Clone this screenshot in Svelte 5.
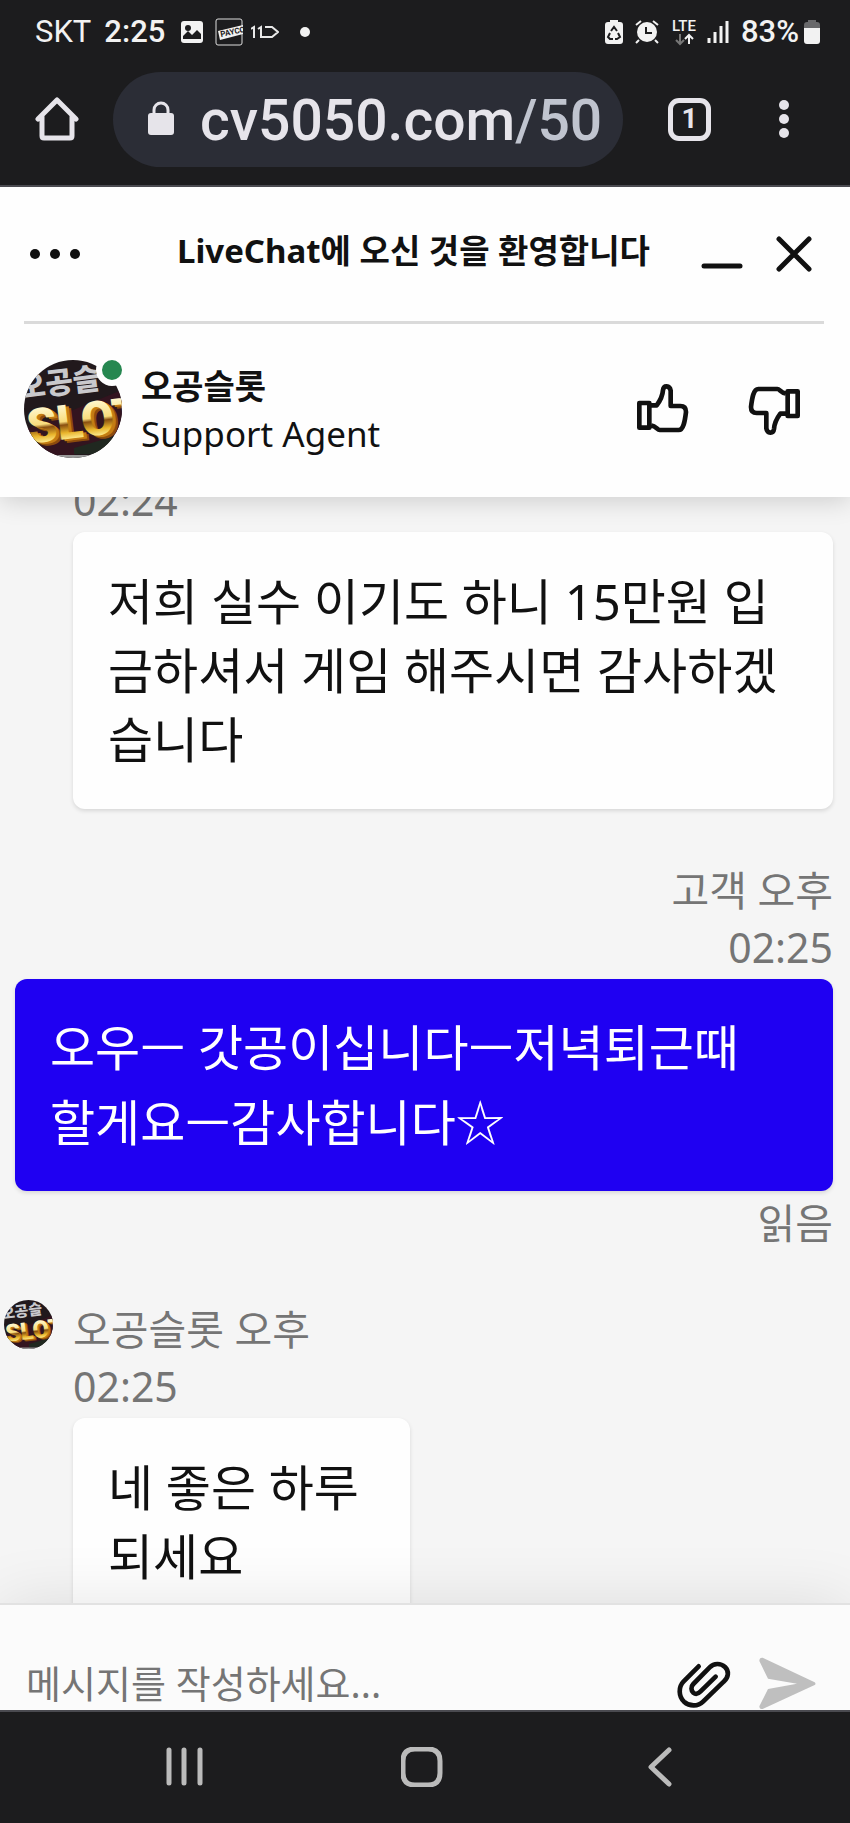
<script>
  const agent = '오공슬롯';

  let draft = $state('');

  const navItems = [
    { label: '최근 앱', path: 'M6 3v33M21 3v33M37 3v33' },
    { label: '홈', path: 'M14 2h13q12 0 12 12v12q0 12 -12 12h-13q-12 0 -12 -12v-12q0 -12 12 -12z' },
    { label: '뒤로', path: 'M30 3L12 20L30 37' }
  ];
</script>

{#snippet avatar(id)}
  <svg class="face" viewBox="0 0 98 98" aria-hidden="true">
    <defs>
      <clipPath id="{id}-clip"><circle cx="49" cy="49" r="49" /></clipPath>
      <linearGradient id="{id}-gold" x1="0" y1="0" x2="0" y2="1">
        <stop offset="0.2" stop-color="#fff6c8" />
        <stop offset="0.48" stop-color="#f8dc7c" />
        <stop offset="0.54" stop-color="#8a5010" />
        <stop offset="0.68" stop-color="#e9b52c" />
        <stop offset="0.82" stop-color="#fff3a0" />
      </linearGradient>
    </defs>
    <g clip-path="url(#{id}-clip)">
      <rect width="98" height="98" fill="#21191c" />
      <path d="M0 70l98-40v40l-50 26H0z" fill="#33141f" />
      <path d="M50 88l48-14v20H50z" fill="#202820" />
      <g transform="rotate(-7 49 49)">
        <text class="kr" x="-3" y="32" font-size="30" fill="#c9c9cc">오공슬</text>
        <text class="slot" x="6" y="82" fill="#8b4d0c">SLOT</text>
        <text class="slot" x="4" y="80" fill="#c27c14">SLOT</text>
        <text class="slot" x="1" y="78" fill="url(#{id}-gold)">SLOT</text>
      </g>
      <rect y="95" width="98" height="3" fill="#999" />
    </g>
  </svg>
{/snippet}

{#snippet thumb()}
  <svg width="55" height="55" viewBox="630 580 165 165" fill="none" stroke="#111" stroke-width="14" stroke-linejoin="round">
    <path d="M643 643h30v74h-30zM680 650h15C710 630 713 620 714 604C716 589 734 589 737 606V652H766C780 652 783 660 783 670C780 695 776 725 760 724H704C697 724 692 712 680 711" />
  </svg>
{/snippet}

<div class="phone" lang="ko">
  <div class="status">
    <span>SKT</span>
    <b class="clock">2:25</b>
    <svg class="photo" width="22" height="22" viewBox="0 0 22 22">
      <rect width="22" height="22" rx="3" fill="#f2f2f2" />
      <circle cx="7" cy="7" r="3" fill="#1c1c1e" />
      <path d="M2 18v-3l5-5 4 4 5-5 4 4v5z" fill="#1c1c1e" />
    </svg>
    <svg class="payco" width="28" height="28" viewBox="0 0 28 28">
      <rect x="1" y="1" width="26" height="26" rx="2" fill="none" stroke="#ddd" />
      <path d="M3 13L28 7v9L5 22z" fill="#f2f2f2" />
      <text x="6" y="19" font-size="8" font-weight="700" fill="#1c1c1e" transform="rotate(-12 6 19)">PAYCO</text>
    </svg>
    <svg class="eleven" width="28" height="14" viewBox="0 0 28 14" fill="none" stroke="#e8e8e8" stroke-width="2">
      <path d="M0 4l3-2v11M7 4l3-2v10h11l6-5-6-5h-7" />
    </svg>
    <svg width="10" height="10" viewBox="0 0 10 10"><circle cx="5" cy="5" r="5" fill="#f2f2f2" /></svg>

    <div class="status-right">
      <svg width="18" height="26" viewBox="0 0 18 26">
        <path d="M5 3V1h8v2h2q3 0 3 3v16q0 3-3 3H3q-3 0-3-3V6q0-3 3-3z" fill="#f2f2f2" />
        <path d="M6 12l3-4 3 4M13 14l2 4-3 2h-2M8 20H5l-2-2 2-4" fill="none" stroke="#1c1c1e" stroke-width="2" />
      </svg>
      <svg class="alarm" width="24" height="24" viewBox="0 0 24 24" fill="none" stroke="#f2f2f2" stroke-width="2">
        <circle cx="12" cy="12" r="10" fill="#f2f2f2" stroke="none" />
        <path d="M1 5l5-4M18 1l5 4M4 20l-3 3M20 20l3 3" />
        <path d="M11 7v6h6" stroke="#1c1c1e" />
      </svg>
      <svg class="lte" width="26" height="28" viewBox="0 0 26 28">
        <text x="0" y="13" font-size="15" font-weight="500" fill="#f2f2f2">LTE</text>
        <path d="M8 16v10M4 22l4 4 4-4" fill="none" stroke="#777" stroke-width="2" />
        <path d="M17 26V17M13 21l4-4 4 4" fill="none" stroke="#f2f2f2" stroke-width="2" />
      </svg>
      <svg class="signal" width="22" height="24" viewBox="0 0 22 24" stroke="#f2f2f2" stroke-width="3">
        <path d="M2 18v5M8 12v11M14 6v17M20 1v22" />
      </svg>
      <b>83%</b>
      <svg class="battery" width="16" height="26" viewBox="0 0 16 26">
        <path d="M4 3V1h8v2h1q3 0 3 3v4H0V6q0-3 3-3z" fill="#69696b" />
        <path d="M0 9h16v13q0 3-3 3H3q-3 0-3-3z" fill="#f2f2f2" />
      </svg>
    </div>
  </div>

  <div class="browser">
    <button class="home" aria-label="홈페이지">
      <svg width="44" height="44" viewBox="0 0 44 44" fill="none" stroke="#e6e4ea" stroke-width="5" stroke-linejoin="round" stroke-linecap="round">
        <path d="M3 22L22 3l19 19M7 19v20q0 2 2 2h26q2 0 2-2V19" />
      </svg>
    </button>
    <button class="address">
      <svg width="26" height="34" viewBox="0 0 26 34">
        <path d="M6 14V9a7 7 0 0 1 14 0v5" fill="none" stroke="#e6e4ea" stroke-width="3" />
        <rect y="12" width="26" height="22" rx="3" fill="#e6e4ea" />
      </svg>
      <span>cv5050.com<i>/50</i></span>
    </button>
    <button class="tabs" aria-label="탭">1</button>
    <button class="more" aria-label="메뉴">
      <svg width="10" height="38" viewBox="0 0 10 38" fill="#e6e4ea">
        <circle cx="5" cy="5" r="5" /><circle cx="5" cy="19" r="5" /><circle cx="5" cy="33" r="5" />
      </svg>
    </button>
  </div>

  <header class="titlebar">
    <button aria-label="옵션">
      <svg width="50" height="10" viewBox="0 0 50 10" fill="#111">
        <circle cx="5" cy="5" r="5" /><circle cx="25" cy="5" r="5" /><circle cx="45" cy="5" r="5" />
      </svg>
    </button>
    <h1>LiveChat에 오신 것을 환영합니다</h1>
    <button aria-label="최소화">
      <svg width="42" height="36" viewBox="0 0 42 36" fill="none" stroke="#111" stroke-width="5" stroke-linecap="round">
        <path d="M3 30h36" />
      </svg>
    </button>
    <button class="close" aria-label="닫기">
      <svg width="36" height="36" viewBox="0 0 36 36" fill="none" stroke="#111" stroke-width="5" stroke-linecap="round">
        <path d="M3 3l30 30M33 3L3 33" />
      </svg>
    </button>
  </header>

  <section class="agent">
    <div class="photo-wrap">
      {@render avatar('big')}
      <span class="online"></span>
    </div>
    <div class="who">
      <h2>{agent}</h2>
      <p>Support Agent</p>
    </div>
    <button aria-label="좋아요">{@render thumb()}</button>
    <button class="down" aria-label="싫어요">{@render thumb()}</button>
  </section>

  <main class="chat">
    <article class="msg first">
      <p class="meta">02:24</p>
      <div class="bubble">저희 실수 이기도 하니 15만원 입금하셔서 게임 해주시면 감사하겠습니다</div>
    </article>

    <article class="msg mine">
      <p class="meta">고객 오후<br />02:25</p>
      <div class="bubble">오우ㅡ 갓공이십니다ㅡ저녁퇴근때<br />할게요ㅡ감사합니다☆</div>
      <p class="meta read">읽음</p>
    </article>

    <article class="msg last">
      <div class="mini">{@render avatar('small')}</div>
      <p class="meta">{agent} 오후<br />02:25</p>
      <div class="bubble">네 좋은 하루<br />되세요</div>
    </article>
  </main>

  <form class="composer" onsubmit={(e) => e.preventDefault()}>
    <input type="text" aria-label="메시지" placeholder="메시지를 작성하세요..." bind:value={draft} />
    <button type="button" aria-label="파일 첨부">
      <svg width="56" height="49" viewBox="754 210 168 147" fill="none" stroke="#111" stroke-width="14" stroke-linecap="round">
        <path d="M822 229L777 274C760 291 762 320 778 335C795 350 820 350 836 334L897 275C912 262 914 243 901 231C888 219 868 219 855 232L806 282C798 290 799 302 806 308C812 313 820 312 827 305L873 260" />
      </svg>
    </button>
    <button aria-label="보내기">
      <svg width="58" height="52" viewBox="998 202 174 156" fill="#bfbfbf">
        <path d="M1012 204L1168 278q5 4 0 8L1012 358q-10 2-10-8L1028 298L1115 282L1028 267L1002 214q0-11 10-10z" />
      </svg>
    </button>
  </form>

  <nav>
    {#each navItems as item}
      <button aria-label={item.label}>
        <svg width="42" height="40" viewBox="0 0 42 40" fill="none" stroke="#bbb" stroke-width="5" stroke-linecap="round" stroke-linejoin="round">
          <path d={item.path} />
        </svg>
      </button>
    {/each}
  </nav>
</div>

<style>
  :global(body) {
    margin: 0;
    background: #1c1c1e;
  }

  .phone {
    display: flex;
    flex-direction: column;
    height: 100vh;
    overflow: hidden;
    color: #111;
    font-family: "Noto Sans", "Noto Sans CJK KR", sans-serif;
  }

  h1, h2, p {
    margin: 0;
  }

  svg {
    display: block;
    flex: none;
  }

  button {
    flex: none;
    padding: 0;
    border: 0;
    background: none;
    color: inherit;
    font: inherit;
  }

  .status {
    display: flex;
    align-items: center;
    height: 64px;
    flex: none;
    padding: 0 30px 0 35px;
    color: #f2f2f2;
    font: 31px/64px Roboto, sans-serif;
  }

  .status b {
    font-weight: 500;
  }

  .clock {
    margin-left: 13px;
  }

  .photo {
    margin-left: 16px;
  }

  .payco {
    margin: 0 8px 0 12px;
  }

  .eleven {
    margin-right: 21px;
  }

  .status-right {
    display: flex;
    align-items: center;
    margin-left: auto;
  }

  .alarm {
    margin-left: 12px;
  }

  .lte {
    margin: 0 9px 0 13px;
  }

  .signal {
    margin-right: 12px;
  }

  .battery {
    margin-left: 5px;
  }

  .browser {
    display: flex;
    align-items: center;
    box-sizing: border-box;
    flex: none;
    height: 123px;
    padding: 0 61px 11px 35px;
    border-bottom: 2px solid #4a4a50;
    color: #e6e4ea;
    font-family: Roboto, sans-serif;
  }

  .address {
    display: flex;
    align-items: center;
    flex: 1;
    gap: 26px;
    height: 95px;
    margin: 0 45px 0 34px;
    padding: 3px 0 0 35px;
    border-radius: 48px;
    background: #2b2d36;
    font-size: 57px;
    font-weight: 500;
  }

  .address svg {
    margin-bottom: 5px;
  }

  .address i {
    color: #c0c4cf;
    font-style: normal;
  }

  .tabs {
    box-sizing: border-box;
    width: 43px;
    height: 43px;
    margin-right: 68px;
    border: 5px solid #e6e4ea;
    border-radius: 11px;
    font-size: 28px;
    font-weight: 700;
    line-height: 32px;
  }

  .titlebar {
    position: relative;
    z-index: 2;
    display: flex;
    align-items: center;
    flex: none;
    height: 134px;
    padding: 0 38px 0 30px;
    background: #fefefe;
  }

  h1 {
    flex: 1;
    padding: 0 0 6px 97px;
    font-size: 33px;
    line-height: 48px;
    white-space: nowrap;
  }

  .close {
    margin-left: 33px;
  }

  .agent {
    position: relative;
    z-index: 1;
    display: flex;
    align-items: center;
    flex: none;
    height: 176px;
    padding: 0 48px 0 24px;
    background: #fefefe;
    box-shadow: 0 4px 24px rgba(0, 0, 0, 0.16);
  }

  .agent::before {
    content: "";
    position: absolute;
    top: 0;
    left: 24px;
    right: 26px;
    height: 3px;
    background: #dadada;
  }

  .photo-wrap {
    position: relative;
    width: 98px;
    height: 98px;
  }

  .face {
    width: 100%;
    height: 100%;
  }

  .kr {
    font-family: "Noto Sans CJK KR", sans-serif;
    font-weight: 900;
  }

  .slot {
    font-family: Roboto, sans-serif;
    font-size: 48px;
    font-weight: 900;
  }

  .online {
    position: absolute;
    top: -6px;
    right: -6px;
    width: 20px;
    height: 20px;
    border: 6px solid #fefefe;
    border-radius: 50%;
    background: #268750;
  }

  .who {
    flex: 1;
    padding: 2px 0 0 19px;
    font-size: 35px;
    line-height: 48px;
  }

  h2 {
    font-size: 34px;
  }

  .down {
    margin-left: 57px;
  }

  .down svg {
    transform: rotate(180deg);
  }

  .chat {
    flex: 1;
    min-height: 0;
    overflow: hidden;
    padding: 0 17px 0 15px;
    background: #f5f5f5;
  }

  .msg {
    position: relative;
    display: flex;
    flex-direction: column;
    align-items: flex-start;
    padding-left: 58px;
  }

  .first {
    margin-top: -25px;
  }

  .meta {
    color: #757575;
    font-size: 41px;
    line-height: 57px;
  }

  .bubble {
    margin-top: 3px;
    padding: 35px;
    border-radius: 12px;
    background: #fefefe;
    box-shadow: 0 2px 4px rgba(0, 0, 0, 0.12);
    font-size: 49px;
    line-height: 69px;
  }

  .mine {
    align-items: flex-end;
    margin-top: 53px;
    padding-left: 0;
  }

  .mine .meta {
    text-align: right;
  }

  .mine .bubble {
    align-self: stretch;
    padding: 31px 35px;
    background: #1f00f2;
    color: #fff;
    line-height: 75px;
  }

  .read {
    margin-top: 4px;
  }

  .last {
    margin-top: 49px;
  }

  .last .bubble {
    padding-right: 51px;
  }

  .mini {
    position: absolute;
    top: -1px;
    left: -11px;
    width: 49px;
    height: 49px;
  }

  .composer {
    position: relative;
    display: flex;
    align-items: flex-end;
    box-sizing: border-box;
    flex: none;
    height: 107px;
    padding: 0 34px 1px 26px;
    border-top: 2px solid #e2e2e2;
    background: #fbfbfb;
    box-shadow: 0 0 64px rgba(0, 0, 0, 0.1);
  }

  .composer input {
    flex: 1;
    min-width: 0;
    height: 52px;
    padding: 0;
    border: 0;
    outline: 0;
    background: none;
    font-family: inherit;
    font-size: 38px;
  }

  .composer input::placeholder {
    color: #757575;
    opacity: 1;
  }

  .composer button + button {
    margin-left: 26px;
  }

  nav {
    position: relative;
    display: flex;
    align-items: center;
    box-sizing: border-box;
    flex: none;
    height: 113px;
    padding: 0 71px 2px 65px;
    border-top: 2px solid #4a4a50;
    background: #1c1c1e;
  }

  nav button {
    display: flex;
    flex: 1;
    justify-content: center;
  }
</style>
